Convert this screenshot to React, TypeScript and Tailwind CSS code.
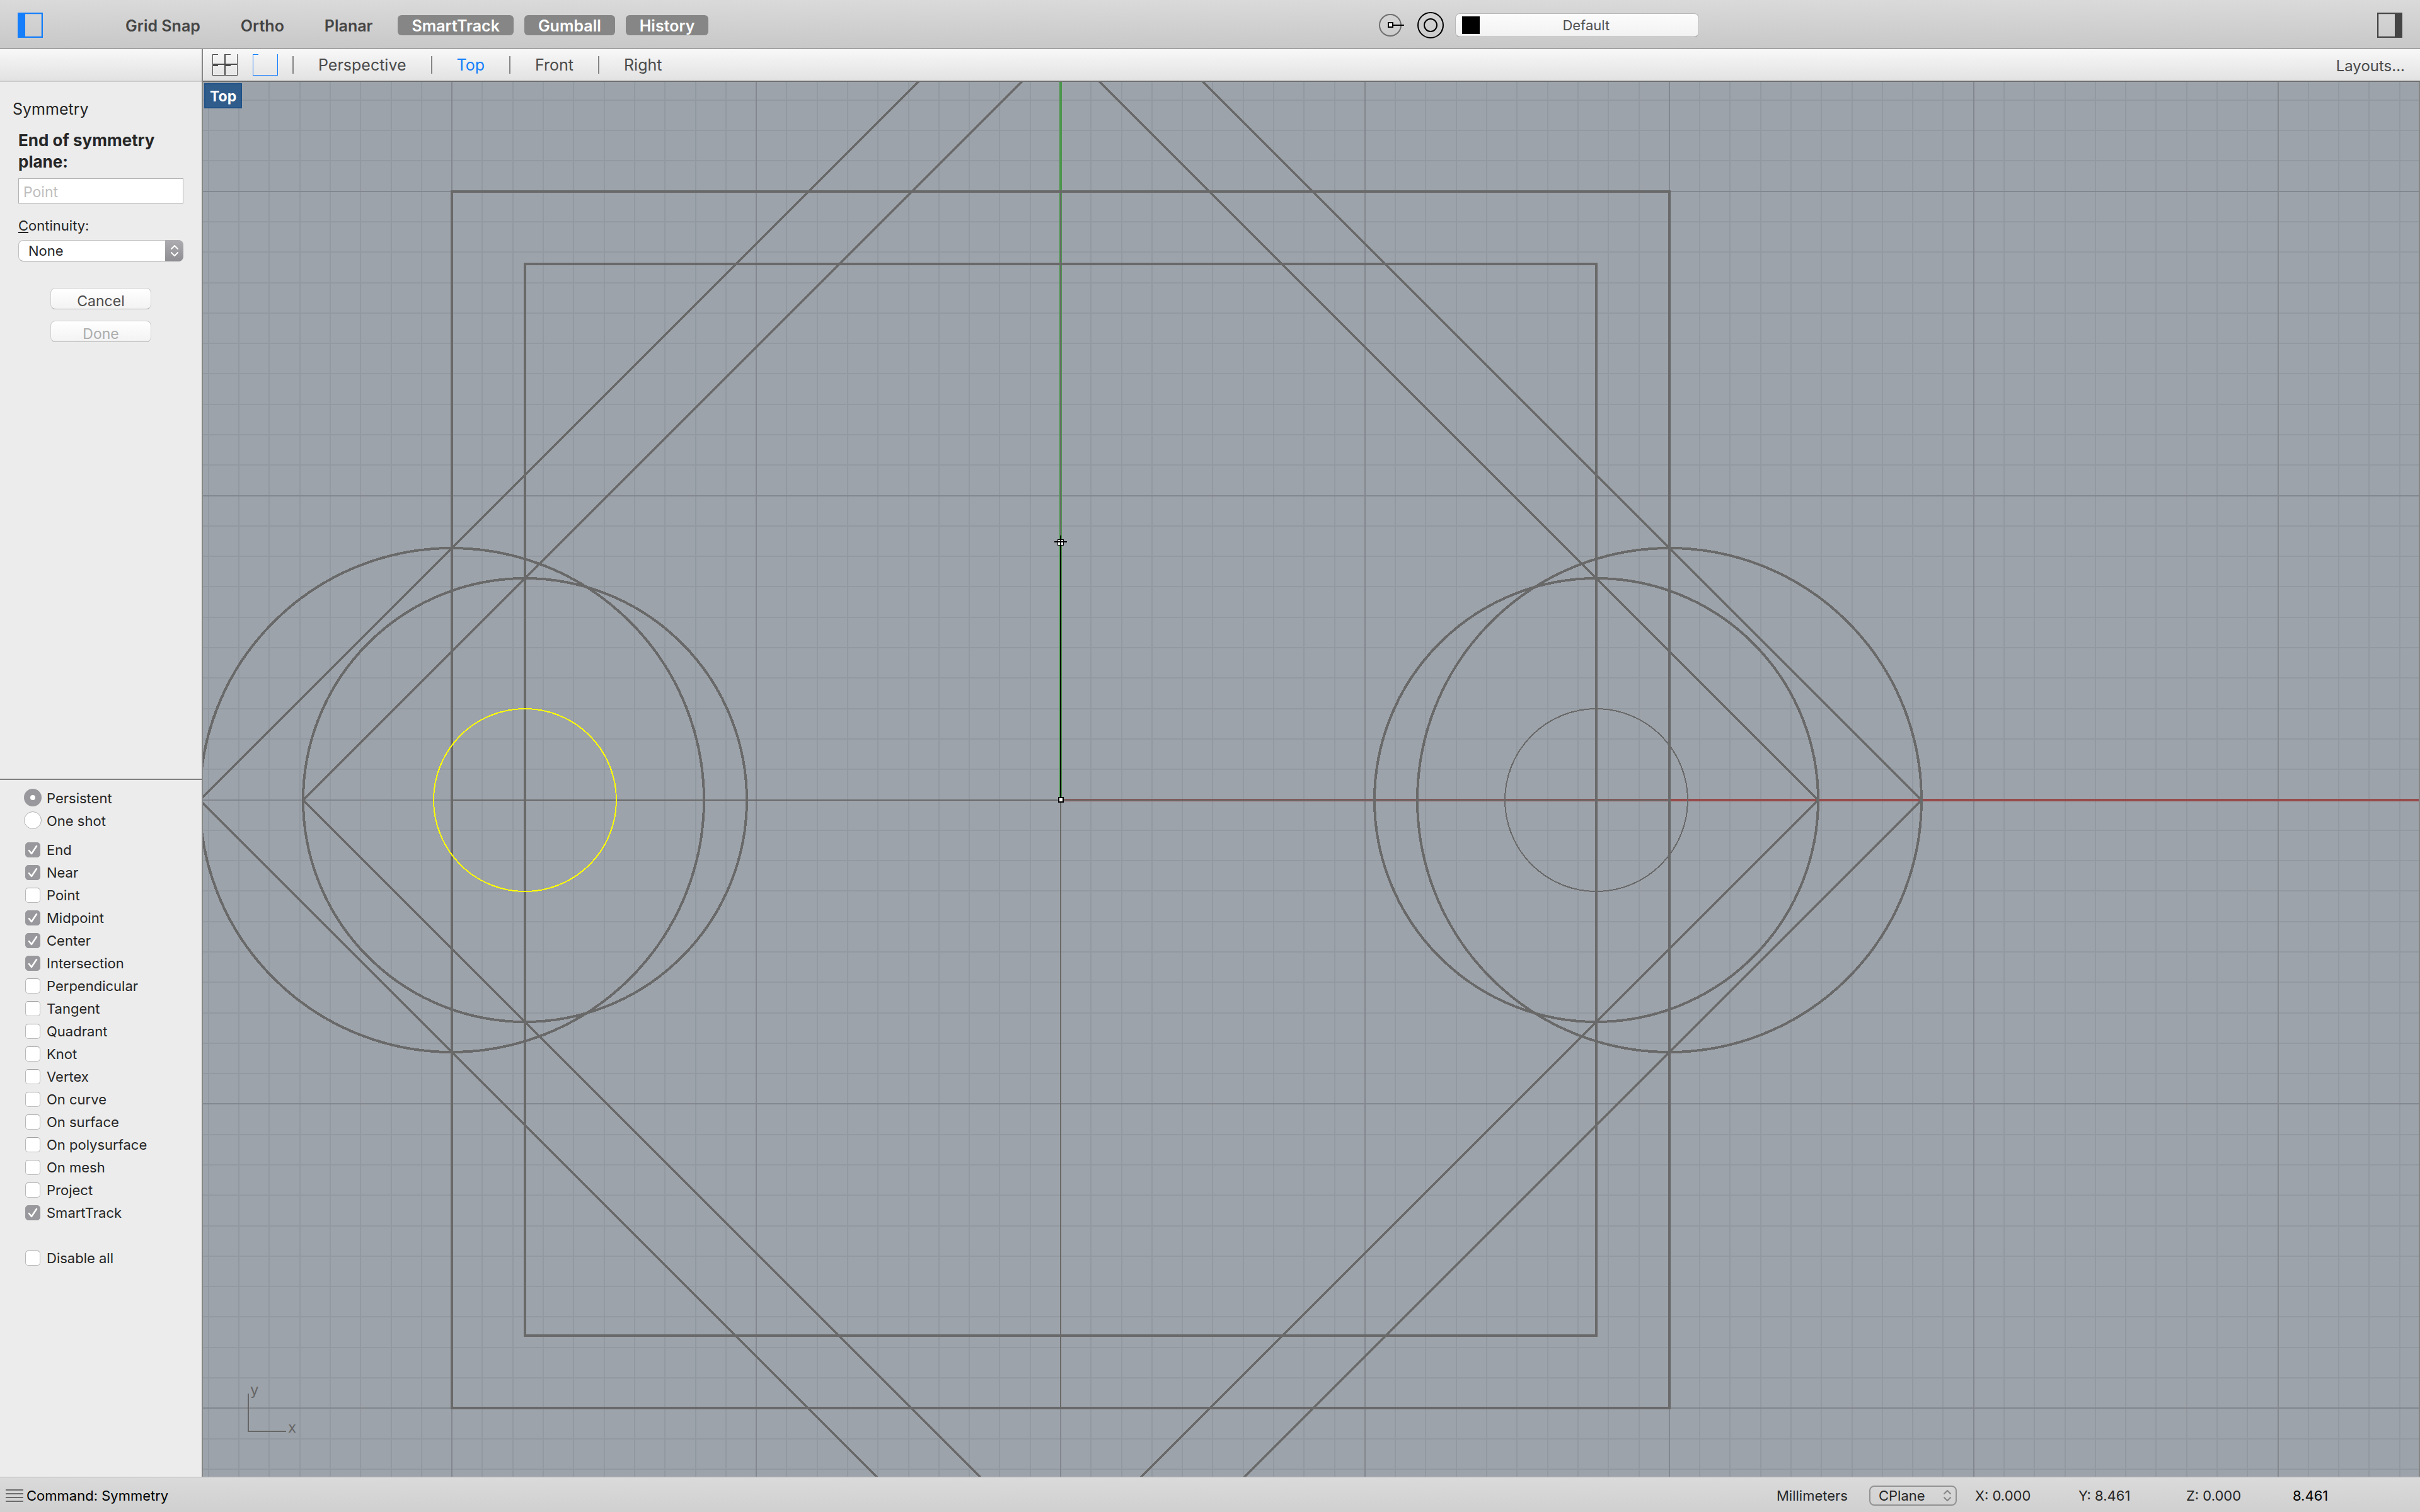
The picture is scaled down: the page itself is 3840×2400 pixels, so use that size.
import { useState } from "react";

const ORIGIN_X = 1683;
const ORIGIN_Y = 1269.5;
const UNIT = 48.29;

const snaps: [string, boolean][] = [
  ["End", true],
  ["Near", true],
  ["Point", false],
  ["Midpoint", true],
  ["Center", true],
  ["Intersection", true],
  ["Perpendicular", false],
  ["Tangent", false],
  ["Quadrant", false],
  ["Knot", false],
  ["Vertex", false],
  ["On curve", false],
  ["On surface", false],
  ["On polysurface", false],
  ["On mesh", false],
  ["Project", false],
  ["SmartTrack", true],
];

function range(from: number, to: number) {
  return Array.from({ length: to - from + 1 }, (_, i) => from + i);
}

function Chevrons({ className }: { className: string }) {
  return (
    <svg viewBox="0 0 14 20" className={className} fill="none" stroke="currentColor" strokeWidth="2" strokeLinecap="round" strokeLinejoin="round" aria-hidden="true">
      <path d="M2 7 L7 2 L12 7 M2 13 L7 18 L12 13" />
    </svg>
  );
}

function ModeButton({ label, active }: { label: string; active?: boolean }) {
  return (
    <button
      type="button"
      aria-pressed={!!active}
      className={
        active
          ? "h-8 rounded-md bg-[#868686] px-[22px] text-[25px] leading-[34px] font-semibold text-white"
          : "h-8 rounded-md px-[22px] text-[25px] leading-[34px] font-semibold text-[#454545]"
      }
    >
      {label}
    </button>
  );
}

function TopBar() {
  return (
    <header className="flex h-[78px] shrink-0 items-center justify-between border-b-2 border-[#a3a3a3] bg-linear-to-b from-[#dadada] to-[#c8c8c8] pt-1 pr-7 pl-7">
      <div className="flex items-center">
        <button type="button" aria-label="Toggle left sidebar">
          <svg viewBox="0 0 40 40" className="size-10" aria-hidden="true">
            <rect x="1" y="1" width="38" height="38" fill="none" stroke="#147efb" strokeWidth="2.5" />
            <rect x="0" y="0" width="12" height="40" fill="#147efb" />
          </svg>
        </button>
        <div className="ml-[109px] flex gap-5">
          <ModeButton label="Grid Snap" />
          <ModeButton label="Ortho" />
          <ModeButton label="Planar" />
        </div>
        <div className="ml-[18px] flex gap-[17px]">
          <ModeButton label="SmartTrack" active />
          <ModeButton label="Gumball" active />
          <ModeButton label="History" active />
        </div>
      </div>
      <div className="mr-3 flex items-center">
        <button type="button" aria-label="Point display">
          <svg viewBox="0 0 42 42" className="size-[42px]" fill="none" aria-hidden="true">
            <circle cx="18" cy="21" r="17" stroke="#6f6f6f" strokeWidth="2" />
            <path d="M22 21 H40" stroke="#000" strokeWidth="2" />
            <rect x="15" y="17" width="7" height="7" fill="#fff" stroke="#000" strokeWidth="2" />
          </svg>
        </button>
        <button type="button" aria-label="Target" className="ml-[19px]">
          <svg viewBox="0 0 42 42" className="size-[42px]" fill="none" stroke="#000" strokeWidth="2" aria-hidden="true">
            <circle cx="21" cy="21" r="20" />
            <circle cx="21" cy="21" r="10" />
          </svg>
        </button>
        <button
          type="button"
          className="ml-[18px] flex h-[38px] w-[387px] items-center rounded-lg border border-[#b8b8b8] border-b-[#999] bg-linear-to-b from-[#fcfcfc] to-[#f2f2f2] px-[10px] text-[22px] text-[#505050]"
        >
          <span className="size-7 bg-black" />
          <span className="flex-1 text-center">Default</span>
        </button>
      </div>
      <button type="button" aria-label="Toggle right sidebar">
        <svg viewBox="0 0 40 40" className="size-10" aria-hidden="true">
          <rect x="1" y="1" width="38" height="38" fill="none" stroke="#454545" strokeWidth="2.5" />
          <rect x="28" y="0" width="12" height="40" fill="#454545" />
        </svg>
      </button>
    </header>
  );
}

function TabBar() {
  const tabs = ["Perspective", "Top", "Front", "Right"];
  return (
    <nav className="flex h-[52px] shrink-0 items-center border-b-2 border-[#6e6e6e] bg-linear-to-b from-[#f8f8f8] to-[#e2e2e2] pr-6 pl-[15px] text-[25px] text-[#4b4b4b]">
      <button type="button" aria-label="Four viewports">
        <svg viewBox="0 0 40 34" className="h-[34px] w-10" fill="none" stroke="#4b4b4b" shapeRendering="crispEdges" aria-hidden="true">
          <path d="M0 .5 H9 M20 .5 H29 M.5 0 V34 M39.5 0 V34 M0 33.5 H40" strokeWidth="1" />
          <path d="M20 0 V34 M0 16 H40" strokeWidth="2" />
          <path d="M0 18 H9 M20 18 H29" strokeWidth="2" />
        </svg>
      </button>
      <button type="button" aria-label="Single viewport" className="ml-6">
        <svg viewBox="0 0 40 34" className="h-[34px] w-10" fill="none" stroke="#147efb" shapeRendering="crispEdges" aria-hidden="true">
          <path d="M0 .5 H9 M.5 0 V34 M39.5 0 V34 M0 33.5 H40" strokeWidth="1" />
        </svg>
      </button>
      <span className="ml-[23px] flex items-center">
        {tabs.map((t) => (
          <span key={t} className="flex items-center">
            <span className="h-7 w-0.5 bg-[#858585]" />
            <button type="button" className={t === "Top" ? "px-[39px] pt-0.5 text-[#147efb]" : "px-[39px] pt-0.5"}>
              {t}
            </button>
          </span>
        ))}
      </span>
      <button type="button" className="ml-auto pt-1 text-[24px]">
        Layouts...
      </button>
    </nav>
  );
}

function SnapBox({ label, initial }: { label: string; initial: boolean }) {
  const [on, setOn] = useState(initial);
  return (
    <label className="flex h-9 items-center gap-[10px] pl-10">
      <span className="relative flex size-6">
        <input
          type="checkbox"
          checked={on}
          onChange={() => setOn(!on)}
          className="size-6 appearance-none rounded-[5px] border border-[#b9b9b9] border-t-[#a0a0a0] bg-white checked:border-[#98989d] checked:bg-[#98989d]"
        />
        {on && (
          <svg viewBox="0 0 24 24" className="pointer-events-none absolute inset-0" fill="none" stroke="#fff" strokeWidth="2.5" strokeLinecap="round" strokeLinejoin="round" aria-hidden="true">
            <path d="M6 13 L10 18 L18 6" />
          </svg>
        )}
      </span>
      <span>{label}</span>
    </label>
  );
}

function SnapRadio({ label, initial }: { label: string; initial?: boolean }) {
  return (
    <label className="flex h-9 items-center gap-2 pl-[38px]">
      <input
        type="radio"
        name="snap-mode"
        defaultChecked={initial}
        className="size-7 appearance-none rounded-full border border-[#b0b0b0] bg-white checked:border-[10px] checked:border-[#98989d]"
      />
      <span className="pt-0.5">{label}</span>
    </label>
  );
}

function Sidebar() {
  return (
    <aside className="flex w-80 shrink-0 flex-col bg-[#ececec] text-[22px] text-[#262626]">
      <div className="h-[52px] shrink-0 border-b-2 border-[#cbcbcb] bg-linear-to-b from-[#f8f8f8] to-[#e2e2e2]" />
      <section className="flex min-h-0 flex-1 flex-col pr-[29px]">
        <h1 className="mt-[26px] pl-5 text-[25px] leading-[34px]">Symmetry</h1>
        <form className="flex flex-col pl-[29px]" onSubmit={(e) => e.preventDefault()}>
          <label htmlFor="point" className="mt-4 text-[26px] leading-[34px] font-bold">
            End of symmetry plane:
          </label>
          <input
            id="point"
            placeholder="Point"
            className="mt-[9px] h-10 rounded-none border border-[#b3b3b3] bg-white px-[7px] pt-1 text-[23px] outline-none placeholder:text-[#bfbfbf]"
          />
          <label htmlFor="continuity" className="mt-[19px] leading-8">
            <u className="underline-offset-2">C</u>ontinuity:
          </label>
          <div className="relative mt-[7px] flex h-[34px]">
            <select
              id="continuity"
              className="w-full appearance-none rounded-lg border border-[#c0c0c0] border-b-[#a5a5a5] bg-white pl-[15px] text-[22px] leading-8"
            >
              <option>None</option>
            </select>
            <span className="pointer-events-none absolute inset-y-0 right-0 flex w-[29px] items-center justify-center rounded-r-lg bg-linear-to-b from-[#adadb1] to-[#8d8d92] text-white">
              <Chevrons className="h-5 w-3.5" />
            </span>
          </div>
          <div className="mt-[42px] flex flex-col items-center gap-[18px]">
            <button type="button" className="h-[34px] w-40 rounded-lg border border-[#cfcfcf] border-b-[#b0b0b0] bg-linear-to-b from-white to-[#f3f3f3] pt-1.5 text-[23px] leading-7 text-[#4d4d4d]">
              Cancel
            </button>
            <button type="button" disabled className="h-[34px] w-40 rounded-lg border border-[#cfcfcf] border-b-[#b0b0b0] bg-linear-to-b from-white to-[#f3f3f3] pt-1.5 text-[23px] leading-7 text-[#adadad]">
              Done
            </button>
          </div>
        </form>
      </section>
      <section className="h-[1108px] shrink-0 border-t-2 border-[#7f7f7f] pt-[10px]">
        <SnapRadio label="Persistent" initial />
        <SnapRadio label="One shot" />
        <div className="mt-[11px]">
          {snaps.map(([label, on]) => (
            <SnapBox key={label} label={label} initial={on} />
          ))}
        </div>
        <div className="mt-9">
          <SnapBox label="Disable all" initial={false} />
        </div>
      </section>
    </aside>
  );
}

function Drawing() {
  const minorX = range(-28, 44).filter((k) => k % 10 !== 0);
  const minorY = range(-23, 22).filter((k) => k % 10 !== 0);
  const px = (k: number) => Math.round(ORIGIN_X + k * UNIT);
  const py = (k: number) => Math.round(ORIGIN_Y + k * UNIT);
  return (
    <svg viewBox="322 130 3518 2214" preserveAspectRatio="xMidYMid slice" className="size-full" fill="none" shapeRendering="crispEdges" role="img" aria-label="Top view drawing">
      <g stroke="#9299a0" strokeWidth="2">
        {minorX.map((k) => (
          <path key={k} d={`M${px(k)} 130 V2344`} />
        ))}
        {minorY.map((k) => (
          <path key={k} d={`M322 ${py(k)} H3840`} />
        ))}
      </g>
      <g stroke="#83878f" strokeWidth="2">
        {[-20, -10, 0, 10, 20, 30, 40].map((k) => (
          <path key={k} d={`M${px(k)} 130 V2344`} />
        ))}
        {[-20, -10, 0, 10, 20].map((k) => (
          <path key={k} d={`M322 ${py(k)} H3840`} />
        ))}
      </g>
      <path d="M1683 130 V1270" stroke="#4b964b" strokeWidth="4" />
      <path d="M1683 1270 H3840" stroke="#964b4b" strokeWidth="4" />
      <g stroke="#696969">
        <path d="M717 1270 H2649 M1683 304 V2235" strokeWidth="2" />
        <circle cx="2533" cy="1270" r="145" strokeWidth="2" />
        <g strokeWidth="3">
          <path d="M1683 -96 L3049 1270 L1683 2636 L317 1270 Z" />
          <path d="M1683 68 L2885 1270 L1683 2472 L481 1270 Z" />
        </g>
        <g strokeWidth="4">
          <path d="M717 304 H2649 V2235 H717 Z" />
          <path d="M833 419 H2533 V2120 H833 Z" />
          <circle cx="717" cy="1270" r="400" />
          <circle cx="833" cy="1270" r="352" />
          <circle cx="2649" cy="1270" r="400" />
          <circle cx="2533" cy="1270" r="352" />
        </g>
      </g>
      <circle cx="833" cy="1270" r="145" stroke="#ffff00" strokeWidth="2" />
      <rect x="1678.5" y="856.5" width="9" height="9" fill="#fff" stroke="#000" />
      <path d="M1683 850 V1270 M1673 860 H1693" stroke="#000" strokeWidth="2" />
      <rect x="1680" y="1266" width="7" height="7" fill="#fff" stroke="#000" strokeWidth="2" />
      <path d="M394 2212 V2272 H454" stroke="#666" strokeWidth="2" />
      <g fill="#666" fontSize="24">
        <text x="397" y="2214">y</text>
        <text x="457" y="2274">x</text>
      </g>
      <path d="M3839 130 V2344" stroke="#858585" strokeWidth="2" />
    </svg>
  );
}

function StatusBar() {
  return (
    <footer className="flex h-14 shrink-0 items-center border-t-2 border-[#d0d0d0] bg-linear-to-b from-[#dadada] to-[#d0d0d0] pt-0.5 pl-[9px] text-[22px] text-[#262626]">
      <button type="button" aria-label="Command history">
        <svg viewBox="0 0 28 20" className="h-5 w-7" stroke="#6b6b6b" strokeWidth="2" shapeRendering="crispEdges" aria-hidden="true">
          <path d="M0 1 H28 M0 7 H28 M0 13 H28 M0 19 H28" />
        </svg>
      </button>
      <span className="ml-[5px] text-black">Command: Symmetry</span>
      <div className="ml-auto flex items-center">
        <span className="w-[147px]">Millimeters</span>
        <div className="relative flex h-8 w-[139px]">
          <select aria-label="Coordinate system" className="w-full appearance-none rounded-lg border-2 border-[#929292] pl-[13px] leading-7">
            <option>CPlane</option>
          </select>
          <span className="pointer-events-none absolute inset-y-0 right-2 flex items-center text-[#858585]">
            <Chevrons className="h-5 w-3.5" />
          </span>
        </div>
        <span className="ml-[29px] w-[164px]">X: 0.000</span>
        <span className="w-[171px]">Y: 8.461</span>
        <span className="w-[169px]">Z: 0.000</span>
        <span className="w-[202px] text-black">8.461</span>
      </div>
    </footer>
  );
}

export default function App() {
  return (
    <div className="flex h-screen flex-col overflow-hidden bg-[#ececec] font-[Inter,sans-serif]">
      <TopBar />
      <div className="flex min-h-0 flex-1">
        <Sidebar />
        <main className="flex min-w-0 flex-1 flex-col border-l-2 border-[#858585]">
          <TabBar />
          <div className="relative min-h-0 flex-1 bg-[#9da3aa]">
            <Drawing />
            <div className="absolute top-0.5 left-0.5 flex h-10 items-center border-2 border-[#1f5288] bg-[#2f5c8b] px-[7px] pt-0.5 text-[23px] font-bold text-white">
              Top
            </div>
          </div>
        </main>
      </div>
      <StatusBar />
    </div>
  );
}
